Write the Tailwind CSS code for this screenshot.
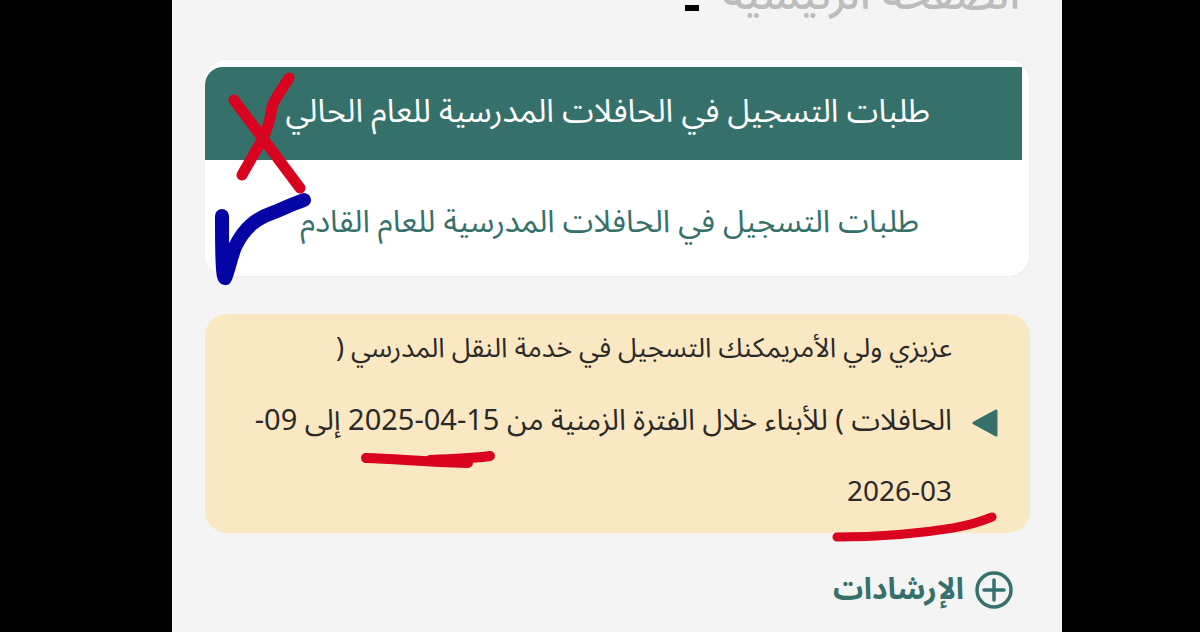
<!DOCTYPE html>
<html lang="ar" dir="rtl">
<head>
<meta charset="UTF-8">
<title>التسجيل في الحافلات</title>
<script src="https://cdn.jsdelivr.net/npm/@tailwindcss/browser@4"></script>
</head>
<body class="bg-black h-[632px] overflow-hidden font-['Noto_Sans_Arabic','Noto_Naskh_Arabic','DejaVu_Sans',sans-serif]">
<div class="relative w-[890px] h-[632px] mr-[138px] bg-[#f4f4f5] overflow-hidden">

    <!-- page title, cut by the top of the screenshot -->
    <div class="h-[59px] pr-[42px] flex items-start gap-[24px]">
        <span class="-mt-[27px] text-[44px] leading-[45px] font-medium text-[#bdbdbd]">الصفحة الرئيسية</span>
        <span class="w-[14px] h-[6px] mt-[5px] bg-black"></span>
    </div>

    <div class="mr-[32px] ml-[33px] h-[218px] bg-white rounded-[22px] border border-l-0 border-[#eeeeee] pt-[7px] pr-[7px] overflow-hidden">
        <div class="h-[93px] bg-[#35716a] rounded-tl-[18px] flex items-center pr-[92px] pb-[4px] text-white text-[32px]">طلبات التسجيل في الحافلات المدرسية للعام الحالي</div>
        <div class="h-[117px] flex items-center pr-[103px] pt-[8px] text-[#35716a] text-[31px]">طلبات التسجيل في الحافلات المدرسية للعام القادم</div>
    </div>

    <div class="mt-[37px] mr-[32px] ml-[33px] h-[219px] bg-[#fae8c3] rounded-[22px] pr-[78px] text-[#2a2a2a] text-[28px]">
        <div class="h-[71px] flex items-center text-[27px]">عزيزي ولي الأمريمكنك التسجيل في خدمة النقل المدرسي (</div>
        <div class="relative h-[72px] flex items-center text-[29px]">
            <svg class="absolute -right-[46px] top-[24px] w-[26px] h-[28px]" viewBox="0 0 26 28" fill="#35716a" stroke="#35716a" stroke-width="3" stroke-linejoin="round"><path d="M24 2V26L2 14Z"/></svg>
            الحافلات ) للأبناء خلال الفترة الزمنية من 15-04-2025 إلى 09-
        </div>
        <div class="h-[71px] flex items-center">2026-03</div>
    </div>

    <div class="mt-[34px] mr-[48px] flex items-center gap-[10px] text-[#35716a] text-[30px] font-bold">
        <svg class="w-[40px] h-[40px]" viewBox="0 0 40 40" fill="none" stroke="#35716a" stroke-width="3.5"><circle cx="20" cy="20" r="17"/><path d="M20 10v20M10 20h20" stroke-linecap="round"/></svg>
        <span>الإرشادات</span>
    </div>

    <!-- pen marks drawn over the screenshot -->
    <svg class="absolute left-0 top-0 w-[890px] h-[632px] pointer-events-none" viewBox="172 0 890 632" fill="none" stroke-linecap="round" stroke-linejoin="round">
        <path d="M234 100 L300 188" stroke="#d9021f" stroke-width="11"/>
        <path d="M289 78 C280 92 274 100 272 107 C270 122 266 132 262 140 L242 175" stroke="#d9021f" stroke-width="11"/>
        <path d="M304 200 C290 205 280 210 272 213 C258 218 245 226 235 247 C230 260 228 272 225 278 C222 278 222 240 222 216" stroke="#0505a5" stroke-width="14"/>
        <path d="M366 458 C400 459 420 462 468 463" stroke="#d9021f" stroke-width="10"/>
        <path d="M430 460 C460 459 475 458 490 456" stroke="#d9021f" stroke-width="10"/>
        <path d="M837 537 C870 537 905 536 953 528 C970 525 980 522 992 517" stroke="#d9021f" stroke-width="9"/>
    </svg>
</div>
</body>
</html>
